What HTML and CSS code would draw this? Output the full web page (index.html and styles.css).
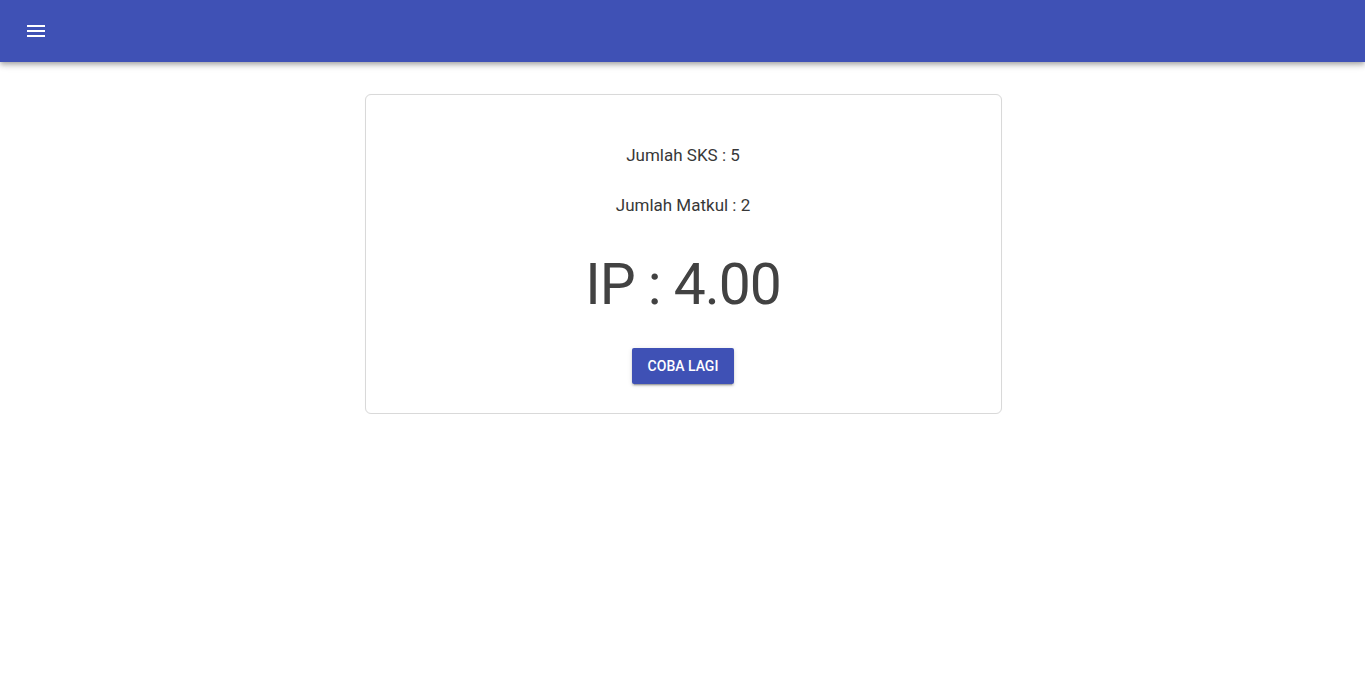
FILE: index.html
```html
<!DOCTYPE html>
<html>
<head>
<meta charset="utf-8">
<link rel="stylesheet" href="styles.css">
</head>
<body>
<header class="toolbar">
  <button class="menu-btn" aria-label="menu">
    <svg width="24" height="24" viewBox="0 0 24 24"><path fill="#fff" d="M3 18h18v-2H3v2zm0-5h18v-2H3v2zm0-7v2h18V6H3z"/></svg>
  </button>
</header>
<main class="content">
  <section class="card">
    <p class="info">Jumlah SKS : 5</p>
    <p class="info">Jumlah Matkul : 2</p>
    <h1 class="ip">IP : 4.00</h1>
    <button class="retry">COBA LAGI</button>
  </section>
</main>
</body>
</html>
```
FILE: styles.css
```css
* { box-sizing: border-box; }
html, body { margin: 0; padding: 0; background: #fff; }
body { font-family: Roboto, "Noto Sans", sans-serif; color: #424242; }
.toolbar {
  height: 62px;
  background: #3f51b5;
  box-shadow: 0 2px 4px -1px rgba(0,0,0,.2), 0 4px 5px 0 rgba(0,0,0,.14), 0 1px 10px 0 rgba(0,0,0,.12);
  display: flex;
  align-items: center;
  padding-left: 24px;
}
.menu-btn {
  background: none; border: 0; padding: 0; margin: 0;
  width: 24px; height: 24px; display: block; cursor: pointer;
}
.menu-btn svg { display: block; }
.content {
  display: flex;
  justify-content: center;
  padding-top: 32px;
  padding-left: 1px;
}
.card {
  width: 637px;
  border: 1px solid #d9d9d9;
  border-radius: 6px;
  background: #fff;
  box-shadow: 0 0 1px rgba(0,0,0,.06);
  display: flex;
  flex-direction: column;
  align-items: center;
  padding: 48px 16px 29px;
}
.info {
  margin: 0 0 26px;
  font-size: 17px;
  line-height: 24px;
  color: #383838;
}
.ip {
  margin: 8px 0 0;
  font-size: 57px;
  font-weight: 400;
  line-height: 68px;
  letter-spacing: -1px;
  color: #424242;
}
.retry {
  margin-top: 29px;
  height: 36px;
  min-width: 88px;
  padding: 0 16px;
  border: 0;
  border-radius: 2px;
  background: #3f51b5;
  color: #fff;
  font-family: Roboto, sans-serif;
  font-size: 14px;
  font-weight: 500;
  box-shadow: 0 3px 1px -2px rgba(0,0,0,.2), 0 2px 2px 0 rgba(0,0,0,.14), 0 1px 5px 0 rgba(0,0,0,.12);
}
```
